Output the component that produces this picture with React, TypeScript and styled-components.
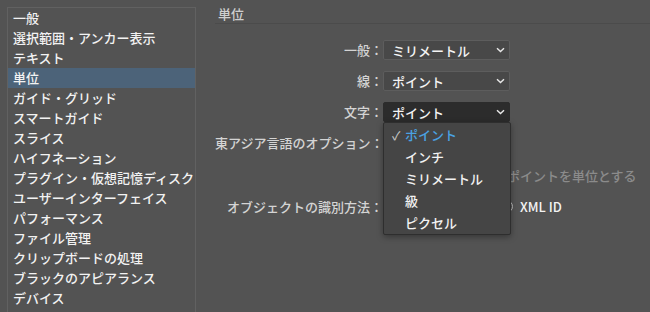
import React from 'react';
import styled, { createGlobalStyle } from 'styled-components';

const GlobalStyle = createGlobalStyle`
  html, body {
    margin: 0;
    padding: 0;
    background: #535353;
  }
  body {
    font-family: "Noto Sans CJK JP", "Noto Sans", sans-serif;
    -webkit-font-smoothing: antialiased;
  }
`;

const Window = styled.div`
  width: 650px;
  height: 312px;
  overflow: hidden;
  display: flex;
  background: #535353;
  color: #ececec;
  font-size: 13px;
  font-weight: 500;
`;

const Sidebar = styled.ul`
  list-style: none;
  margin: 7px 0 0 7px;
  padding: 0;
  width: 187px;
  height: 320px;
  flex-shrink: 0;
  border: 1px solid #616161;
  border-bottom: none;
`;

const NavItem = styled.li<{ $active?: boolean }>`
  height: 20px;
  line-height: 20px;
  padding-left: 5px;
  white-space: nowrap;
  color: #f2f2f2;
  background: ${(p) => (p.$active ? '#4c6379' : 'transparent')};
`;

const Main = styled.div`
  flex: 1;
  padding-left: 19px;
`;

const Header = styled.div`
  height: 24px;
  line-height: 16px;
  padding: 6px 0 0 3px;
  box-sizing: border-box;
  border-bottom: 1px solid #4b4b4b;
  color: #cfcfcf;
`;

const Form = styled.div`
  display: grid;
  grid-template-columns: 168px 1fr;
  grid-auto-rows: 20px;
  row-gap: 11px;
  padding-top: 16px;
`;

const Label = styled.div<{ $push?: number }>`
  text-align: right;
  line-height: 20px;
  white-space: nowrap;
  color: #d4d4d4;
  margin-top: ${(p) => p.$push ?? 0}px;
`;

const Control = styled.div<{ $push?: number; $indent?: number }>`
  position: relative;
  display: flex;
  align-items: center;
  white-space: nowrap;
  margin-top: ${(p) => p.$push ?? 0}px;
  padding-left: ${(p) => p.$indent ?? 0}px;
`;

const Select = styled.div<{ $focused?: boolean }>`
  width: 127px;
  height: 20px;
  box-sizing: border-box;
  display: flex;
  align-items: center;
  justify-content: space-between;
  padding: 0 4px 0 8px;
  border-radius: 2px;
  color: #f4f4f4;
  background: ${(p) => (p.$focused ? '#2c2c2c' : '#484848')};
  border: 1px solid ${(p) => (p.$focused ? '#2c2c2c' : '#5d5d5d')};
`;

const Menu = styled.ul`
  position: absolute;
  top: 20px;
  left: 0;
  width: 128px;
  margin: 0;
  padding: 1px 0 0;
  list-style: none;
  box-sizing: border-box;
  background: #454545;
  border: 1px solid #2e2e2e;
  border-radius: 2px;
  box-shadow: 0 2px 6px rgba(0, 0, 0, 0.35);
  z-index: 5;
`;

const MenuItem = styled.li<{ $checked?: boolean }>`
  height: 22px;
  line-height: 22px;
  padding-left: 21px;
  position: relative;
  color: ${(p) => (p.$checked ? '#4aa2e3' : '#f2f2f2')};
`;

const Check = styled.span`
  position: absolute;
  left: 8px;
  top: 0;
  color: #c4c4c4;
  font-size: 12px;
`;

const Box = styled.span`
  width: 11px;
  height: 11px;
  border: 1px solid #8a8a8a;
  border-radius: 2px;
  margin-left: 6px;
  flex-shrink: 0;
`;

const Dim = styled.span`
  color: #8b8b8b;
`;

const Radio = styled.span`
  width: 11px;
  height: 11px;
  border: 1px solid #bdbdbd;
  border-radius: 50%;
  margin-right: 7px;
  flex-shrink: 0;
`;

const RadioOption = styled.span`
  display: flex;
  align-items: center;
  color: #f2f2f2;
`;

function Chevron() {
  return (
    <svg width="9" height="6" viewBox="0 0 9 6">
      <path d="M1 1.2 L4.5 4.6 L8 1.2" fill="none" stroke="#e8e8e8" strokeWidth="1.4" />
    </svg>
  );
}

const navItems = [
  '一般',
  '選択範囲・アンカー表示',
  'テキスト',
  '単位',
  'ガイド・グリッド',
  'スマートガイド',
  'スライス',
  'ハイフネーション',
  'プラグイン・仮想記憶ディスク',
  'ユーザーインターフェイス',
  'パフォーマンス',
  'ファイル管理',
  'クリップボードの処理',
  'ブラックのアピアランス',
  'デバイス',
];

const units = ['ポイント', 'インチ', 'ミリメートル', '級', 'ピクセル'];

export default function App() {
  return (
    <>
      <GlobalStyle />
      <Window>
        <Sidebar>
          {navItems.map((n) => (
            <NavItem key={n} $active={n === '単位'}>{n}</NavItem>
          ))}
        </Sidebar>
        <Main>
          <Header>単位</Header>
          <Form>
            <Label>一般：</Label>
            <Control>
              <Select>ミリメートル<Chevron /></Select>
            </Control>

            <Label>線：</Label>
            <Control>
              <Select>ポイント<Chevron /></Select>
            </Control>

            <Label>文字：</Label>
            <Control>
              <Select $focused>ポイント<Chevron /></Select>
              <Menu>
                {units.map((u, i) => (
                  <MenuItem key={u} $checked={i === 0}>
                    {i === 0 && <Check>✓</Check>}
                    {u}
                  </MenuItem>
                ))}
              </Menu>
            </Control>

            <Label>東アジア言語のオプション：</Label>
            <Control>
              <Box />
            </Control>

            <Label $push={2} />
            <Control $push={2} $indent={124}>
              <Dim>ポイントを単位とする</Dim>
            </Control>

            <Label $push={2}>オブジェクトの識別方法：</Label>
            <Control $push={2} $indent={117}>
              <RadioOption>
                <Radio />XML ID
              </RadioOption>
            </Control>
          </Form>
        </Main>
      </Window>
    </>
  );
}
